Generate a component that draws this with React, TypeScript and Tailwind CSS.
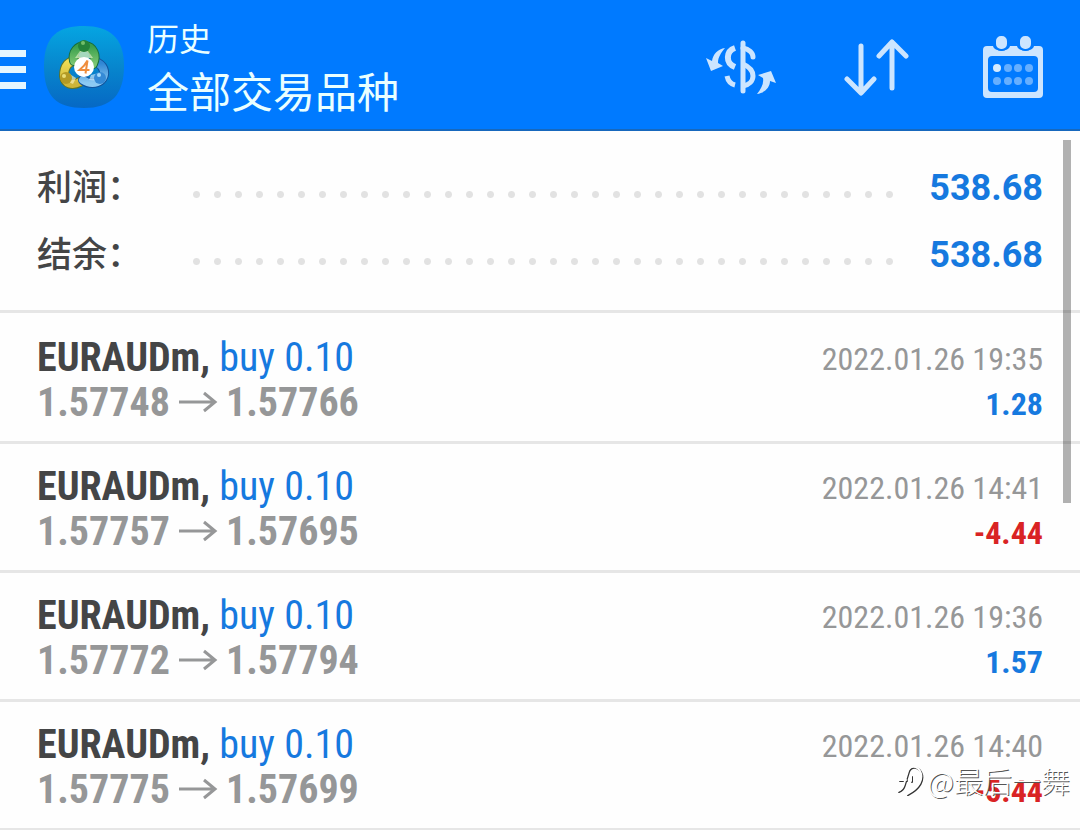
type Deal = { symbol: string; volume: string; open: string; close: string; time: string; profit: string };

const deals: Deal[] = [
  { symbol: "EURAUDm", volume: "buy 0.10", open: "1.57748", close: "1.57766", time: "2022.01.26 19:35", profit: "1.28" },
  { symbol: "EURAUDm", volume: "buy 0.10", open: "1.57757", close: "1.57695", time: "2022.01.26 14:41", profit: "-4.44" },
  { symbol: "EURAUDm", volume: "buy 0.10", open: "1.57772", close: "1.57794", time: "2022.01.26 19:36", profit: "1.57" },
  { symbol: "EURAUDm", volume: "buy 0.10", open: "1.57775", close: "1.57699", time: "2022.01.26 14:40", profit: "-5.44" },
];

const totals = [
  { label: "利润：", value: "538.68" },
  { label: "结余：", value: "538.68" },
];

function AppLogo() {
  return (
    <svg viewBox="0 0 82 84" className="h-[84px] w-[82px] shrink-0" aria-hidden="true">
      <defs>
        <linearGradient id="tile" x1="0" y1="0" x2="0" y2="1">
          <stop offset="0" stopColor="#05a5e2" />
          <stop offset="0.5" stopColor="#0786cd" />
          <stop offset="1" stopColor="#0668c4" />
        </linearGradient>
        <linearGradient id="green" x1="0" y1="0" x2="0" y2="1">
          <stop offset="0" stopColor="#3a9f4c" />
          <stop offset="1" stopColor="#7cc672" />
        </linearGradient>
        <linearGradient id="yellow" x1="0" y1="0" x2="0" y2="1">
          <stop offset="0" stopColor="#f0de55" />
          <stop offset="1" stopColor="#cdb53a" />
        </linearGradient>
        <linearGradient id="blue" x1="0" y1="0" x2="0" y2="1">
          <stop offset="0" stopColor="#2f86d4" />
          <stop offset="1" stopColor="#8ccaf3" />
        </linearGradient>
      </defs>
      <path d="M41 1C66 1 81 12 81 41S68 83 41 83 1 72 1 41 16 1 41 1Z" fill="url(#tile)" />
      <g fill="none" strokeLinecap="round">
        <path d="M34 36c-8-1-13 5-13 15 1 8 8 10 16 6" stroke="#5e7428" strokeWidth="10" />
        <path d="M34 36c-8-1-13 5-13 15 1 8 8 10 16 6" stroke="url(#yellow)" strokeWidth="8" />
        <path d="M55 38c7 4 8 12 3 17-5 4-12 4-18 0" stroke="#12539c" strokeWidth="10" />
        <path d="M55 38c7 4 8 12 3 17-5 4-12 4-18 0" stroke="url(#blue)" strokeWidth="8" />
        <path d="M31 36c-2-9 4-15 11-15 8 1 12 9 8 18" stroke="#176d3d" strokeWidth="10" />
        <path d="M31 36c-2-9 4-15 11-15 8 1 12 9 8 18" stroke="url(#green)" strokeWidth="8" />
      </g>
      <path d="M37 26h8l5 7H32Z" fill="#cdeab8" opacity=".8" />
      <path d="M25 48l8 5-3 6-7-3Z" fill="#f6edb2" opacity=".7" />
      <path d="M48 50l8-2v8l-10-1Z" fill="#cbe7fb" opacity=".7" />
      <circle cx="41" cy="21" r="6" fill="#25833a" />
      <circle cx="40" cy="18" r="2" fill="#73bd69" />
      <circle cx="23" cy="53" r="6" fill="#b39a25" />
      <circle cx="21" cy="51" r="2" fill="#eadd77" />
      <circle cx="57" cy="53" r="6" fill="#358ad6" />
      <circle cx="56" cy="50" r="2" fill="#a6dcfc" />
      <circle cx="41" cy="42" r="10" fill="#fff" />
      <path d="M42.500 48.500l2-13c-2 4-5 7-8 9.500h10" fill="none" stroke="#ef8d3c" strokeWidth="2" />
    </svg>
  );
}

function CurrencyIcon() {
  return (
    <svg viewBox="0 0 72 56" className="h-[56px] w-[72px]" fill="none" stroke="#cce5ff" strokeWidth="5" aria-hidden="true">
      <path d="M38 4v48" strokeLinecap="round" />
      <path d="M38 9c6 1 10 5 10 9" strokeLinecap="round" />
      <path d="M30 9c-9 3-10 15 0 19" strokeWidth="6" />
      <path d="M38 25c7 3 10 7 10 12s-4 9-10 10" />
      <path d="M22 37c1 5 4 8 8 9" />
      <path d="M20 9C13 10 8 15 7 22l-6-3 5 13 12-5-5-3c0-6 3-10 7-15Z" fill="#cce5ff" stroke="none" />
      <path d="M52 55c8-1 13-7 13-13l6 2-5-12-13 4 5 3c1 6-2 11-6 16Z" fill="#cce5ff" stroke="none" />
    </svg>
  );
}

function SortIcon() {
  return (
    <svg viewBox="0 0 66 58" className="h-[58px] w-[66px]" fill="none" stroke="#cce5ff" strokeWidth="5" strokeLinecap="round" strokeLinejoin="round" aria-hidden="true">
      <path d="M18 8v46M4 41l14 14 13-14M49 50V4M36 18L49 4l14 14" />
    </svg>
  );
}

function CalendarIcon() {
  return (
    <svg viewBox="0 0 62 64" className="h-[64px] w-[62px]" aria-hidden="true">
      <path fillRule="evenodd" fill="#cce5ff" d="M5 11h6c1 6 16 6 17 0h7c1 6 16 6 17 0h5a4 4 0 0 1 4 4v44a4 4 0 0 1-4 4H5a4 4 0 0 1-4-4V15a4 4 0 0 1 4-4Zm5 10a4 4 0 0 0-4 4v28a4 4 0 0 0 4 4h42a4 4 0 0 0 4-4V25a4 4 0 0 0-4-4Z" />
      <rect x="13" y="0" width="13" height="15" rx="6" fill="#cce5ff" stroke="#007aff" strokeWidth="2" />
      <rect x="37" y="0" width="13" height="15" rx="6" fill="#cce5ff" stroke="#007aff" strokeWidth="2" />
      <g fill="#66afff">
        <circle cx="15" cy="33" r="4" fill="#d6ebff" />
        <circle cx="26" cy="33" r="4" />
        <circle cx="36" cy="33" r="4" />
        <circle cx="47" cy="33" r="4" />
        <circle cx="15" cy="46" r="4" />
        <circle cx="26" cy="46" r="4" />
        <circle cx="36" cy="46" r="4" />
        <circle cx="47" cy="46" r="4" />
      </g>
    </svg>
  );
}

function Arrow() {
  return (
    <svg viewBox="0 0 40 24" className="h-[24px] w-[40px]" fill="none" stroke="#969798" strokeWidth="3" aria-label="至" role="img">
      <path d="M1 11h36M26 2l11 9-11 9" />
    </svg>
  );
}

function Header() {
  return (
    <header className="flex h-[131px] items-center border-b-2 border-[#1768bd] bg-[#007aff] pr-[36px] pt-[5px]">
      <button type="button" aria-label="菜单" className="mr-[17px] flex w-[26px] shrink-0 flex-col gap-[9px] pt-[5px]">
        <span className="h-[7px] bg-[#e5f6ff]" />
        <span className="h-[7px] bg-[#e5f6ff]" />
        <span className="h-[7px] bg-[#e5f6ff]" />
      </button>
      <AppLogo />
      <div className="ml-[22px] flex-1 pt-[6px] text-[#eaffff]">
        <h1 className="text-[32px] leading-[48px]">历史</h1>
        <p className="text-[42px] leading-[60px]">全部交易品种</p>
      </div>
      <div className="flex items-center">
        <button type="button" aria-label="货币" className="mr-[66px]"><CurrencyIcon /></button>
        <button type="button" aria-label="排序" className="mr-[73px]"><SortIcon /></button>
        <button type="button" aria-label="日期"><CalendarIcon /></button>
      </div>
    </header>
  );
}

function DealRow({ deal }: { deal: Deal }) {
  const tone = deal.profit.startsWith("-") ? "text-[#d92324]" : "text-[#1679df]";
  return (
    <li className="flex h-[129px] justify-between border-b-[3px] border-[#e6e6e6] px-[37px] pt-[20px] font-['Roboto_Condensed','Liberation_Sans_Narrow',Roboto,sans-serif]">
      <div className="text-[40px] leading-[45px]">
        <p className="whitespace-pre">
          <b className="text-[#444546]">{deal.symbol}, </b>
          <span className="text-[#1679df]">{deal.volume}</span>
        </p>
        <p className="flex items-center gap-[8px] font-bold text-[#969798]">
          <span>{deal.open}</span>
          <Arrow />
          <span>{deal.close}</span>
        </p>
      </div>
      <div className="pt-[2px] text-right text-[32px] leading-[45px]">
        <p className="text-[#969798]">{deal.time}</p>
        <p className={`font-bold ${tone}`}>{deal.profit}</p>
      </div>
    </li>
  );
}

function AuthorMark() {
  const outline = "M2 28c3-1 5-3 6-7L12 8c2-5 8-6 12 0 4 8-1 17-13 23M3 17h7M15 13v5";
  return (
    <div className="absolute right-[10px] top-[760px] flex items-center gap-[4px] text-white [text-shadow:1px_1px_0px_#555]">
      <svg viewBox="0 0 28 34" className="h-[34px] w-[28px]" fill="none" strokeLinecap="round" strokeLinejoin="round" strokeWidth="2" aria-hidden="true">
        <path d={outline} stroke="#333" transform="translate(1 1)" />
        <path d={outline} stroke="#fff" />
      </svg>
      <span className="font-['Noto_Sans_CJK_SC',sans-serif] text-[29px] font-light leading-[40px]">@最后一舞</span>
    </div>
  );
}

export default function App() {
  return (
    <div className="relative min-h-screen overflow-hidden bg-[#fefefe] font-[Roboto,'Noto_Sans_CJK_SC',sans-serif]">
      <Header />
      <main>
        <dl className="border-b-[3px] border-[#e6e6e6] px-[37px] pb-[22px] pt-[23px]">
          {totals.map((t) => (
            <div key={t.label} className="flex h-[67px] items-center">
              <dt className="w-[149px] pt-[4px] text-[35px] font-medium text-[#444546]">{t.label}</dt>
              <dd className="flex flex-1 items-center justify-between">
                <span className="mt-[14px] h-[7px] w-[714px] bg-[radial-gradient(circle,#e2e2e2_3px,transparent_4px)] bg-[length:21px_7px]" />
                <span className="text-[36px] font-bold text-[#1679df]">{t.value}</span>
              </dd>
            </div>
          ))}
        </dl>
        <ul className="pt-[2px]">
          {deals.map((d) => (
            <DealRow key={d.close} deal={d} />
          ))}
        </ul>
      </main>
      <div className="absolute right-[9px] top-[140px] h-[363px] w-[8px] bg-black/30" />
      <AuthorMark />
    </div>
  );
}
